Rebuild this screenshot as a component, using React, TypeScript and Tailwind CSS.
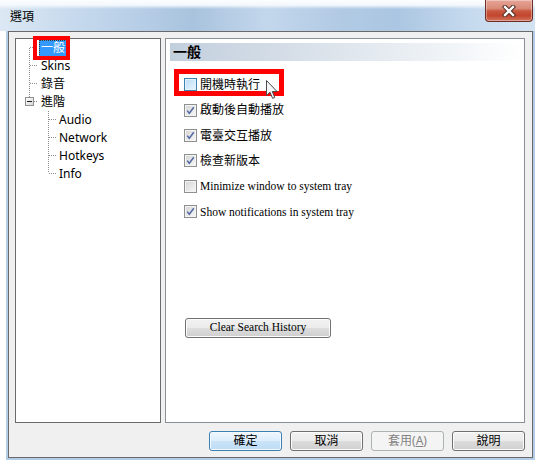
import React from "react";

const cjk = "font-['Noto_Sans','Noto_Sans_CJK_TC',sans-serif]";
const serif = "font-['Liberation_Serif','Noto_Sans_CJK_TC',serif]";

type TreeItem = { label: string; child?: boolean; selected?: boolean };

const treeItems: TreeItem[] = [
  { label: "一般", selected: true },
  { label: "Skins" },
  { label: "錄音" },
  { label: "進階" },
  { label: "Audio", child: true },
  { label: "Network", child: true },
  { label: "Hotkeys", child: true },
  { label: "Info", child: true },
];

type Option = { label: string; checked: boolean; hover?: boolean; latin?: boolean; h: string };

const options: Option[] = [
  { label: "開機時執行", checked: false, hover: true, h: "h-[25px]" },
  { label: "啟動後自動播放", checked: true, h: "h-[26px]" },
  { label: "電臺交互播放", checked: true, h: "h-[25px]" },
  { label: "檢查新版本", checked: true, h: "h-[25px]" },
  { label: "Minimize window to system tray", checked: false, latin: true, h: "h-[26px]" },
  { label: "Show notifications in system tray", checked: true, latin: true, h: "h-[25px]" },
];

function CheckBox({ checked, hover }: { checked: boolean; hover?: boolean }) {
  return (
    <span
      className={
        hover
          ? "flex h-[13px] w-[13px] shrink-0 items-center justify-center border border-[#3c7fb1] bg-[linear-gradient(135deg,#b9dcf5,#eaf6fe)] shadow-[inset_0_0_0_1px_#e4f3fd]"
          : "flex h-[13px] w-[13px] shrink-0 items-center justify-center border border-[#8e8f8f] bg-[linear-gradient(135deg,#d4d4d4,#f8f8f8)] shadow-[inset_0_0_0_1px_#f4f4f4]"
      }
    >
      {checked && (
        <svg width="11" height="11" viewBox="0 0 11 11">
          <path d="M2.2 5.6 L4.3 8.3 L8.8 2.2" fill="none" stroke="#5269a3" strokeWidth="1.5" />
        </svg>
      )}
    </span>
  );
}

function TreeLines() {
  const dot = { stroke: "#8c8c8c", strokeDasharray: "1 1", shapeRendering: "crispEdges" as const };
  return (
    <svg className="pointer-events-none absolute left-0 top-0" width="144" height="150">
      {/* root level */}
      <line x1="13.5" y1="9" x2="13.5" y2="58" {...dot} />
      {[8, 26, 44].map((y) => (
        <line key={y} x1="14" y1={y + 0.5} x2="22" y2={y + 0.5} {...dot} />
      ))}
      <line x1="18" y1="62.5" x2="22" y2="62.5" {...dot} />
      {/* children */}
      <line x1="32.5" y1="72" x2="32.5" y2="134" {...dot} />
      {[80, 98, 116, 134].map((y) => (
        <line key={y} x1="33" y1={y + 0.5} x2="41" y2={y + 0.5} {...dot} />
      ))}
      {/* collapse box */}
      <defs>
        <linearGradient id="bx" x1="0" y1="0" x2="1" y2="1">
          <stop offset="0" stopColor="#ffffff" />
          <stop offset="1" stopColor="#d6d6d6" />
        </linearGradient>
      </defs>
      <rect x="9.5" y="58.5" width="8" height="8" fill="url(#bx)" stroke="#919191" shapeRendering="crispEdges" />
      <line x1="11" y1="62.5" x2="16" y2="62.5" stroke="#1e1e1e" shapeRendering="crispEdges" />
    </svg>
  );
}

function DialogButton({ kind, children }: { kind: "default" | "normal" | "disabled"; children: React.ReactNode }) {
  const base = "flex h-[20px] w-[73px] items-center justify-center rounded-[3px] border text-[12px] leading-none";
  if (kind === "default")
    return (
      <div className={`${base} border-[#3c7fb1] bg-[linear-gradient(to_bottom,#eef7fe_0%,#dcedfb_50%,#cbe4f9_50%,#bddcf6_100%)] shadow-[inset_0_0_0_1px_#f4faff] text-black`}>
        {children}
      </div>
    );
  if (kind === "disabled")
    return <div className={`${base} border-[#adb2b5] bg-[#f4f4f4] text-[#838383]`}>{children}</div>;
  return (
    <div className={`${base} border-[#707070] bg-[linear-gradient(to_bottom,#f2f2f2_0%,#ebebeb_50%,#dddddd_50%,#cfcfcf_100%)] shadow-[inset_0_0_0_1px_#fcfcfc] text-black`}>
      {children}
    </div>
  );
}

export default function App() {
  return (
    <div className={`h-[467px] w-[540px] overflow-hidden bg-white ${cjk}`}>
      <div className="w-[535px]">
        {/* 標題列 */}
        <div className="flex h-[31px] items-start justify-between bg-[image:linear-gradient(to_bottom,#fbfdff_0px,#f4f8fc_5px,rgba(255,255,255,0)_9px),linear-gradient(to_right,#dce8f4_0%,#c6d9ed_14%,#b7cee7_26%,#a9c3de_36%,#c3d7ec_50%,#b3cbe5_62%,#abc6e2_74%,#c6daee_88%,#d3e3f2_100%)]">
          <span className="ml-[10px] mt-[9px] text-[12px] leading-[16px] text-black">選項</span>
          <div className="mr-[2px] flex h-[22px] w-[48px] items-center justify-center rounded-b-[4px] border border-t-0 border-[#6e2d24] bg-[linear-gradient(to_bottom,#e6a597_0%,#d98a78_40%,#c9583f_52%,#c2462d_75%,#d27660_100%)] shadow-[inset_0_0_0_1px_rgba(255,255,255,0.35)]">
            <svg width="14" height="12" viewBox="0 0 14 12">
              <path d="M3 2 L11 10 M11 2 L3 10" stroke="#4a2a22" strokeWidth="4.4" strokeLinecap="square" />
              <path d="M3 2 L11 10 M11 2 L3 10" stroke="#ffffff" strokeWidth="2.4" strokeLinecap="square" />
            </svg>
          </div>
        </div>

        {/* 視窗本體 */}
        <div className="ml-[6px] w-[529px] border-x-2 border-b-2 border-[#b4cde6]">
          <div className="flex h-[427px] flex-col border border-[#6a6a6a] bg-[#f0f0f0] pb-[6px] pl-[6px] pr-[7px] pt-[6px]">
            <div className="flex h-[385px] gap-[4px]">
              {/* 樹狀選單 */}
              <div className="relative h-full w-[146px] border border-[#6b6b6b] bg-white">
                <TreeLines />
                <div className="flex flex-col">
                  {treeItems.map((it) => (
                    <div key={it.label} className={it.child ? "flex h-[18px] items-center pl-[41px]" : "flex h-[18px] items-center pl-[23px]"}>
                      <span
                        className={
                          it.selected
                            ? "flex h-[17px] items-center bg-[#3399ff] px-[2px] text-[12px] leading-[16px] text-white outline-1 -outline-offset-1 outline-dotted outline-[#3d3d1f]"
                            : "flex h-[17px] items-center px-[2px] text-[12px] leading-[16px] text-black"
                        }
                      >
                        {it.label}
                      </span>
                    </div>
                  ))}
                </div>
                <div className="absolute left-[17px] top-[-3px] h-[24px] w-[37px] border-4 border-[#ff0000]" />
              </div>

              {/* 設定內容 */}
              <div className="relative flex h-full w-[360px] flex-col border border-[#8b8f96] bg-white">
                <div className="ml-[4px] mr-[1px] mt-[4px] flex h-[18px] items-center bg-[linear-gradient(to_right,#c2cfdd_0%,#d9e1ea_40%,#eef2f6_75%,#ffffff_100%)] pl-[3px]">
                  <span className="text-[14px] font-bold leading-none text-black">一般</span>
                </div>

                <div className="mt-[11px] flex flex-col">
                  {options.map((o) => (
                    <div key={o.label} className={`flex items-center gap-[3px] pl-[18px] ${o.h}`}>
                      <CheckBox checked={o.checked} hover={o.hover} />
                      <span className={o.latin ? `${serif} text-[11.5px] leading-[14px] text-black` : "text-[12px] leading-[14px] text-black"}>
                        {o.label}
                      </span>
                    </div>
                  ))}
                </div>

                <div className={`ml-[19px] mt-[94px] flex h-[20px] w-[146px] items-center justify-center rounded-[3px] border border-[#707070] bg-[linear-gradient(to_bottom,#f2f2f2_0%,#ebebeb_50%,#dddddd_50%,#cfcfcf_100%)] shadow-[inset_0_0_0_1px_#fcfcfc] text-[11.5px] leading-none text-black ${serif}`}>
                  Clear Search History
                </div>

                {/* 標註框與游標 */}
                <div className="absolute left-[8px] top-[30px] h-[27px] w-[110px] border-[5px] border-[#ff0000]" />
                <svg className="absolute left-[100px] top-[41px]" width="13" height="20" viewBox="0 0 13 20">
                  <path d="M0.5 0.5 L0.5 15.5 L4 12.2 L6.6 18.4 L8.8 17.5 L6.3 11.5 L11 11.5 Z" fill="#f7f7f7" stroke="#4a4a4a" strokeWidth="1" strokeLinejoin="round" />
                </svg>
              </div>
            </div>

            <div className="mt-[8px] flex h-[20px] justify-end gap-[8px]">
              <DialogButton kind="default">確定</DialogButton>
              <DialogButton kind="normal">取消</DialogButton>
              <DialogButton kind="disabled">
                套用(<span className="underline">A</span>)
              </DialogButton>
              <DialogButton kind="normal">說明</DialogButton>
            </div>
          </div>
        </div>
      </div>
    </div>
  );
}
